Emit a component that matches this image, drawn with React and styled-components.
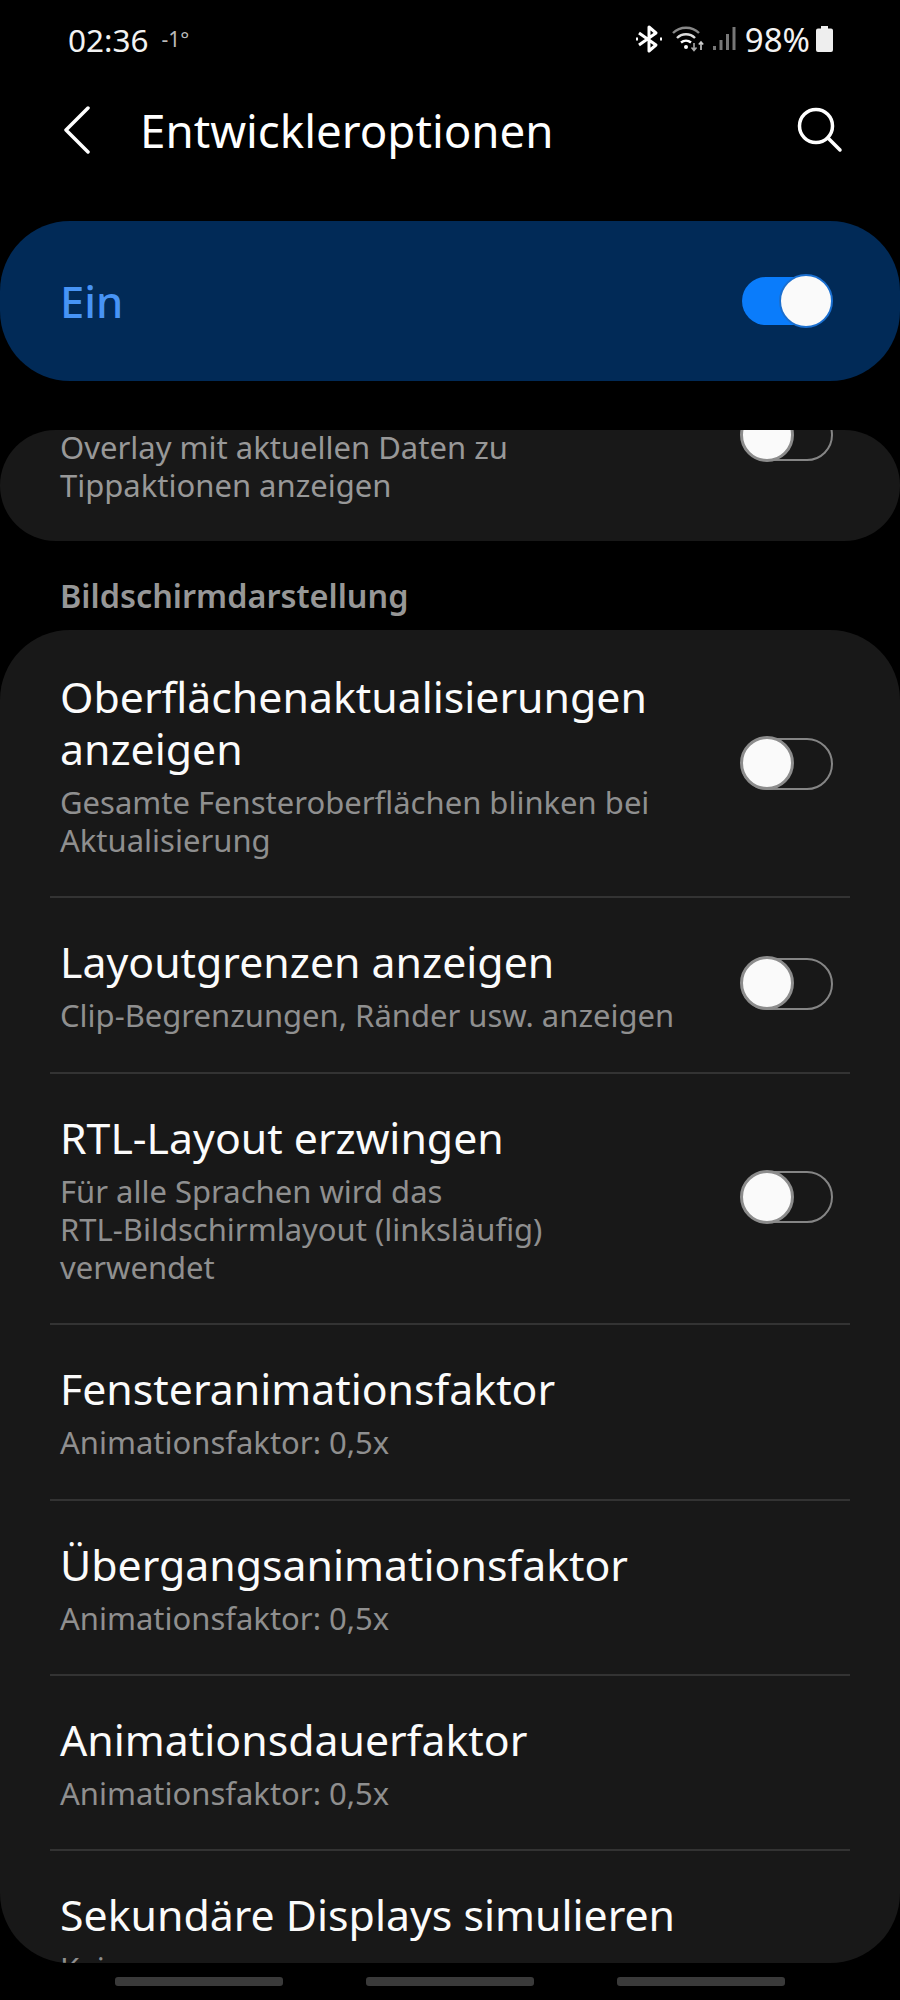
import React from "react";
import styled, { createGlobalStyle } from "styled-components";

const rows = [
  {
    title: ["Oberflächenaktualisierungen", "anzeigen"],
    sub: ["Gesamte Fensteroberflächen blinken bei", "Aktualisierung"],
    toggle: true,
  },
  {
    title: ["Layoutgrenzen anzeigen"],
    sub: ["Clip-Begrenzungen, Ränder usw. anzeigen"],
    toggle: true,
  },
  {
    title: ["RTL-Layout erzwingen"],
    sub: ["Für alle Sprachen wird das", "RTL-Bildschirmlayout (linksläufig)", "verwendet"],
    toggle: true,
  },
  { title: ["Fensteranimationsfaktor"], sub: ["Animationsfaktor: 0,5x"] },
  { title: ["Übergangsanimationsfaktor"], sub: ["Animationsfaktor: 0,5x"] },
  { title: ["Animationsdauerfaktor"], sub: ["Animationsfaktor: 0,5x"] },
  { title: ["Sekundäre Displays simulieren"], sub: ["Keine"] },
];

function Lines({ items }) {
  return items.map((line) => <span key={line}>{line}</span>);
}

function App() {
  return (
    <Screen>
      <GlobalStyle />
      <StatusBar>
        <Time>02:36</Time>
        <Temp>-1°</Temp>
        <StatusRight>
          <svg width="28" height="30" viewBox="0 0 28 30" fill="none" stroke="#fff" strokeWidth="3">
            <path d="M4 9 L21 21 L14 27 V3 L21 9 L4 21" strokeLinejoin="round" />
            <path d="M1 15h2M25 15h2" />
          </svg>
          <svg width="34" height="28" viewBox="0 0 32 28" fill="none" stroke="#aaa" strokeWidth="2.4">
            <path d="M1 8 C8 1 20 1 27 8" stroke="#888" />
            <path d="M5 13 C10 8 18 8 23 13" stroke="#ddd" />
            <path d="M9 17.5 C12 15 16 15 19 17.5" stroke="#fff" />
            <circle cx="14" cy="22" r="2" fill="#fff" stroke="none" />
            <path d="M22 18v7M19.5 22.5l2.5 3 2.500-3" strokeWidth="1.6" stroke="#aaa" />
            <path d="M29 25v-8M26.800 19.500l2.200-2.500 2.200 2.500" strokeWidth="1.6" stroke="#ccc" />
          </svg>
          <svg width="23" height="24" viewBox="0 0 23 24" fill="#777">
            <rect x="0" y="19" width="3" height="4" />
            <rect x="6.500" y="13" width="3" height="10" />
            <rect x="13" y="7" width="3" height="16" />
            <rect x="19.500" y="0" width="3" height="23" />
          </svg>
          <Battery>98%</Battery>
          <svg width="17" height="26" viewBox="0 0 17 26" fill="#eee">
            <path d="M5 0h7v2.500h3a2 2 0 0 1 2 2V24a2 2 0 0 1-2 2H2a2 2 0 0 1-2-2V4.500a2 2 0 0 1 2-2h3z" />
          </svg>
        </StatusRight>
      </StatusBar>

      <Header>
        <HeaderLeft>
          <svg width="27" height="48" viewBox="0 0 27 48" fill="none" stroke="#fff" strokeWidth="3.500" strokeLinecap="round" strokeLinejoin="round">
            <path d="M24 2 L2 24 L24 46" />
          </svg>
          <Title>Entwickleroptionen</Title>
        </HeaderLeft>
        <svg width="46" height="46" viewBox="0 0 46 46" fill="none" stroke="#fff" strokeWidth="3.500" strokeLinecap="round">
          <circle cx="19" cy="19" r="16.500" />
          <path d="M31 31 L43 43" />
        </svg>
      </Header>

      <MasterCard>
        <MasterLabel>Ein</MasterLabel>
        <OnTrack>
          <OnKnob />
        </OnTrack>
      </MasterCard>

      <ClippedCard>
        <ClippedText>
          <Lines items={["Overlay mit aktuellen Daten zu", "Tippaktionen anzeigen"]} />
        </ClippedText>
        <ClippedToggle>
          <OffKnob />
        </ClippedToggle>
      </ClippedCard>

      <SectionLabel>Bildschirmdarstellung</SectionLabel>

      <ListCard>
        {rows.map((row, i) => (
          <Row key={row.title[0]} $last={i === rows.length - 1}>
            <RowText>
              <RowTitle>
                <Lines items={row.title} />
              </RowTitle>
              <RowSub>
                <Lines items={row.sub} />
              </RowSub>
            </RowText>
            {row.toggle && (
              <RowToggle>
                <OffKnob />
              </RowToggle>
            )}
          </Row>
        ))}
      </ListCard>

      <NavBar>
        <NavPill />
        <NavPill />
        <NavPill />
      </NavBar>
    </Screen>
  );
}

const GlobalStyle = createGlobalStyle`
  html, body {
    margin: 0;
    background: #000;
  }
  * {
    box-sizing: border-box;
  }
`;

const Screen = styled.div`
  width: 900px;
  height: 2000px;
  overflow: hidden;
  background: #000;
  color: #fff;
  font-family: "Noto Sans", "Open Sans", sans-serif;
`;

const StatusBar = styled.div`
  height: 78px;
  padding: 0 67px 0 68px;
  display: flex;
  align-items: center;
`;

const Time = styled.div`
  font-size: 31.5px;
  color: #f2f2f2;
`;

const Temp = styled.div`
  font-size: 21px;
  color: #bbb;
  margin-left: 13px;
`;

const StatusRight = styled.div`
  margin-left: auto;
  display: flex;
  align-items: center;
  gap: 8px;
`;

const Battery = styled.div`
  font-size: 33px;
  color: #f2f2f2;
  margin-left: 1px;
  margin-right: -2px;
`;

const Header = styled.div`
  height: 104px;
  padding: 0 57px 0 64px;
  display: flex;
  align-items: center;
  justify-content: space-between;
`;

const HeaderLeft = styled.div`
  display: flex;
  align-items: center;
  gap: 49px;
`;

const Title = styled.div`
  font-size: 45.7px;
`;

const MasterCard = styled.div`
  margin-top: 39px;
  height: 160px;
  padding: 0 68px 0 60px;
  border-radius: 70px;
  background: #012a57;
  display: flex;
  align-items: center;
  justify-content: space-between;
`;

const MasterLabel = styled.div`
  font-size: 43.5px;
  font-weight: 500;
  color: #4794f5;
`;

const OnTrack = styled.div`
  position: relative;
  width: 90px;
  height: 48px;
  border-radius: 24px;
  background: #0a7cfb;
`;

const OnKnob = styled.div`
  position: absolute;
  right: -1px;
  top: -3px;
  width: 54px;
  height: 54px;
  border-radius: 50%;
  background: #fafafa;
  border: 2px solid #1a6fd0;
`;

const ClippedCard = styled.div`
  position: relative;
  margin-top: 49px;
  height: 111px;
  overflow: hidden;
  padding: 0 67px 0 60px;
  border-radius: 60px;
  background: #181818;
  display: flex;
  justify-content: space-between;
  align-items: flex-start;
`;

const ClippedText = styled.div`
  display: flex;
  flex-direction: column;
  margin-top: -2px;
  font-size: 31px;
  line-height: 38px;
  color: #989898;
`;

const OffTrack = styled.div`
  position: relative;
  flex: none;
  width: 92px;
  height: 52px;
  border-radius: 26px;
  border: 2.500px solid #858585;
`;

const ClippedToggle = styled(OffTrack)`
  margin-top: -21px;
`;

const RowToggle = styled(OffTrack)`
  margin-top: -3px;
`;

const OffKnob = styled.div`
  position: absolute;
  left: -3.500px;
  top: -3.500px;
  width: 54px;
  height: 54px;
  border-radius: 50%;
  background: #fafafa;
  border: 3px solid #8c8c8c;
`;

const SectionLabel = styled.div`
  height: 89px;
  padding: 33px 0 0 60px;
  font-size: 32.4px;
  line-height: 42px;
  font-weight: 600;
  color: #979797;
`;

const ListCard = styled.div`
  height: 1333px;
  overflow: hidden;
  padding: 3px 50px 0;
  border-radius: 70px;
  background: #181818;
`;

const Row = styled.div`
  padding: 38px 17px 37.4px 10px;
  display: flex;
  align-items: center;
  justify-content: space-between;
  border-bottom: ${(p) => (p.$last ? "none" : "2px solid #333")};
`;

const RowText = styled.div`
  display: flex;
  flex-direction: column;
`;

const RowTitle = styled.div`
  display: flex;
  flex-direction: column;
  font-size: 42.8px;
  line-height: 52px;
  color: #fbfbfb;
`;

const RowSub = styled.div`
  display: flex;
  flex-direction: column;
  margin-top: 8px;
  font-size: 31px;
  line-height: 38px;
  color: #8f8f8f;
`;

const NavBar = styled.div`
  padding-top: 14px;
  display: flex;
  justify-content: center;
  gap: 83px;
`;

const NavPill = styled.div`
  width: 168px;
  height: 9px;
  border-radius: 3px;
  background: #3a3a3a;
`;

export default App;
